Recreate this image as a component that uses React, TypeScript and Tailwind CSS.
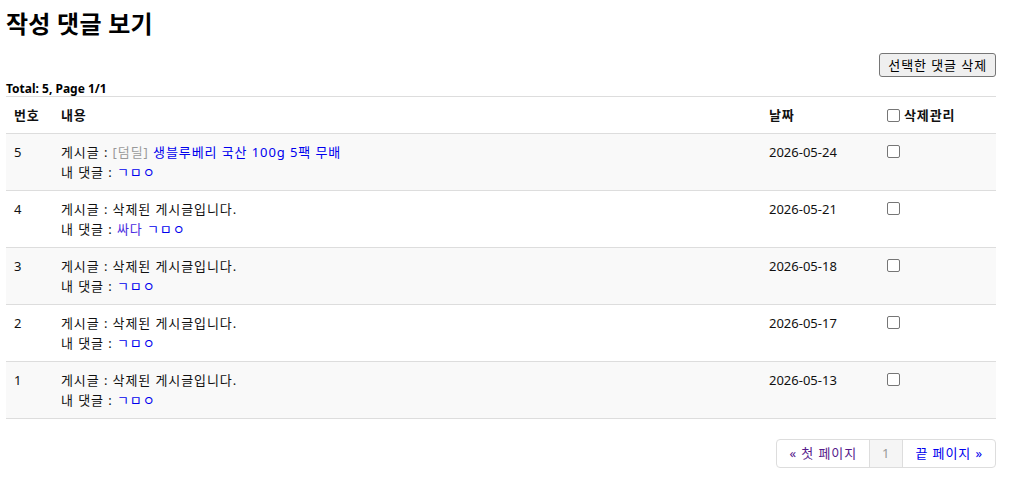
import React from "react";

type Row = {
  no: number;
  tag?: string;
  title: string;
  deleted: boolean;
  comment: string;
  visited?: string;
  date: string;
};

const rows: Row[] = [
  { no: 5, tag: "[덤딜]", title: "생블루베리 국산 100g 5팩 무배", deleted: false, comment: "ㄱㅁㅇ", date: "2026-05-24" },
  { no: 4, title: "삭제된 게시글입니다.", deleted: true, comment: "ㄱㅁㅇ", visited: "싸다", date: "2026-05-21" },
  { no: 3, title: "삭제된 게시글입니다.", deleted: true, comment: "ㄱㅁㅇ", date: "2026-05-18" },
  { no: 2, title: "삭제된 게시글입니다.", deleted: true, comment: "ㄱㅁㅇ", date: "2026-05-17" },
  { no: 1, title: "삭제된 게시글입니다.", deleted: true, comment: "ㄱㅁㅇ", date: "2026-05-13" },
];

const font = "font-['Segoe_UI','Noto_Sans','Noto_Sans_CJK_KR',sans-serif]";
// hangul in the fallback font runs a little narrow, so open it up
const ko = "tracking-[0.07em]";

const Check = () => (
  <input
    type="checkbox"
    className="block appearance-none w-[13px] h-[13px] border border-[#767676] rounded-[2px] bg-white m-0"
  />
);

const App = () => {
  return (
    <div className={`${font} text-[13px] text-[#111] bg-white min-h-screen px-[6px] pt-[6px] w-[1002px]`}>
      <h1 className="text-[24px] leading-[36px] font-bold text-black tracking-[0.01em]">작성 댓글 보기</h1>

      <div className="flex justify-end mt-[11px]">
        <button className={`h-[24px] px-[8px] text-[13px] leading-[22px] bg-[#efefef] border border-[#767676] rounded-[3px] text-black ${ko}`}>
          선택한 댓글 삭제
        </button>
      </div>

      <div className="text-[12px] font-bold leading-[14px] mt-[5px] text-black">Total: 5, Page 1/1</div>

      <table className="w-full border-collapse">
        <thead>
          <tr className="border-t border-b border-[#ddd] text-left">
            <th className={`w-[47px] px-[8px] py-[8px] leading-[20px] font-bold ${ko}`}>번호</th>
            <th className={`px-[8px] py-[8px] leading-[20px] font-bold ${ko}`}>내용</th>
            <th className={`w-[118px] px-[8px] py-[8px] leading-[20px] font-bold ${ko}`}>날짜</th>
            <th className="w-[117px] px-[8px] py-[8px] leading-[20px] font-bold">
              <div className="flex items-center gap-[4px] h-[20px]">
                <Check />
                <span className={ko}>삭제관리</span>
              </div>
            </th>
          </tr>
        </thead>
        <tbody>
          {rows.map((r, i) => (
            <tr key={r.no} className={`border-b border-[#ddd] align-top ${i % 2 === 0 ? "bg-[#f9f9f9]" : "bg-white"}`}>
              <td className="px-[8px] py-[8px] leading-[20px]">{r.no}</td>
              <td className={`px-[8px] py-[8px] leading-[20px] ${ko}`}>
                <div>
                  게시글 :{" "}
                  {r.tag && <span className="text-[#999]">{r.tag} </span>}
                  <span className={r.deleted ? "" : "text-[#0000ee]"}>{r.title}</span>
                </div>
                <div>
                  내 댓글 :{" "}
                  {r.visited && <span className="text-[#4a2ce0]">{r.visited} </span>}
                  <span className="text-[#0000ee]">{r.comment}</span>
                </div>
              </td>
              <td className="px-[8px] py-[8px] leading-[20px]">{r.date}</td>
              <td className="px-[8px] py-[8px] leading-[20px]">
                <div className="pt-[3px]">
                  <Check />
                </div>
              </td>
            </tr>
          ))}
        </tbody>
      </table>

      <div className="flex justify-end mt-[20px]">
        <div className={`flex border border-[#ddd] rounded-[4px] text-[13px] leading-[27px] overflow-hidden ${ko}`}>
          <span className="px-[12px] text-[#551a8b]">« 첫 페이지</span>
          <span className="px-[12px] border-l border-r border-[#ddd] bg-[#f5f5f5] text-[#999]">1</span>
          <span className="px-[12px] text-[#0000ee]">끝 페이지 »</span>
        </div>
      </div>
    </div>
  );
};

export default App;
